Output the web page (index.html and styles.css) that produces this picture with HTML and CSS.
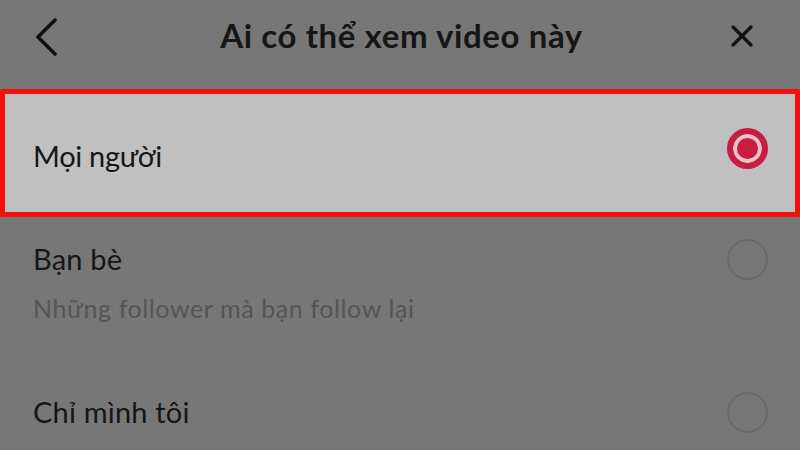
FILE: index.html
```html
<!DOCTYPE html>
<html lang="vi">
<head>
<meta charset="utf-8">
<link rel="stylesheet" href="styles.css">
</head>
<body>
<div class="screen">
  <header class="header">
    <svg class="icon back" width="40" height="40" viewBox="0 0 40 40"><polyline points="22,2 5,19 22,36" fill="none" stroke="#111" stroke-width="3.6" stroke-linecap="round" stroke-linejoin="round"/></svg>
    <h1 class="title">Ai có thể xem video này</h1>
    <svg class="icon close" width="24" height="24" viewBox="0 0 24 24"><path d="M3 3 L21 21 M21 3 L3 21" fill="none" stroke="#111" stroke-width="3.2" stroke-linecap="round"/></svg>
  </header>
  <ul class="list">
    <li class="row selected">
      <div class="row-text"><div class="row-title">Mọi người</div></div>
      <div class="radio-wrap"><span class="radio on"></span></div>
    </li>
    <li class="row friends">
      <div class="row-text">
        <div class="row-title">Bạn bè</div>
        <div class="row-sub">Những follower mà bạn follow lại</div>
      </div>
      <div class="radio-wrap"><span class="radio"></span></div>
    </li>
    <li class="row">
      <div class="row-text"><div class="row-title">Chỉ mình tôi</div></div>
      <div class="radio-wrap"><span class="radio"></span></div>
    </li>
  </ul>
</div>
</body>
</html>
```

FILE: styles.css
```css
* { box-sizing: border-box; }
html, body { margin: 0; padding: 0; }
body {
  width: 800px;
  height: 450px;
  overflow: hidden;
  background: #777777;
  font-family: Lato, "Open Sans", sans-serif;
  color: #161616;
}
.screen { width: 800px; height: 450px; }
.header {
  height: 74px;
  display: flex;
  align-items: center;
  justify-content: space-between;
  padding: 0 46px 0 33px;
}
.icon { display: block; }
.back { margin-top: 2px; }
.close { margin-top: -2px; }
.title {
  margin: 0 0 4px 0;
  font-size: 33px;
  font-weight: 700;
  color: #161616;
  letter-spacing: 0.6px;
  flex: 1;
  text-align: center;
  padding-left: 0;
}
.list {
  list-style: none;
  margin: 15px 0 0 0;
  padding: 0;
}
.row {
  display: flex;
  justify-content: space-between;
  align-items: flex-start;
  padding: 22px 32px 22px 33px;
}
.row.selected {
  height: 128px;
  align-items: center;
  background: #c0c0c0;
  border: 5px solid #f50f0f;
  padding: 0 27px 0 28px;
}
.row.friends { padding-bottom: 47px; }
.row-title {
  font-size: 29px;
  line-height: 40px;
  font-weight: 400;
  color: #161616;
  letter-spacing: 0.2px;
}
.row.selected .row-title { margin-top: 6px; letter-spacing: -0.3px; }
.row-sub {
  margin-top: 14px;
  font-size: 25px;
  line-height: 30px;
  color: #555555;
  letter-spacing: 0.6px;
}
.radio-wrap {
  height: 40px;
  display: flex;
  align-items: center;
}
.row.selected .radio-wrap { margin-top: -10px; }
.radio {
  display: block;
  width: 41px;
  height: 41px;
  border-radius: 50%;
  border: 2px solid #6a6a6a;
}
.radio.on {
  border: 6px solid #c81d40;
  background: #c81d40;
  box-shadow: inset 0 0 0 4px #e2c4ca;
}
```
